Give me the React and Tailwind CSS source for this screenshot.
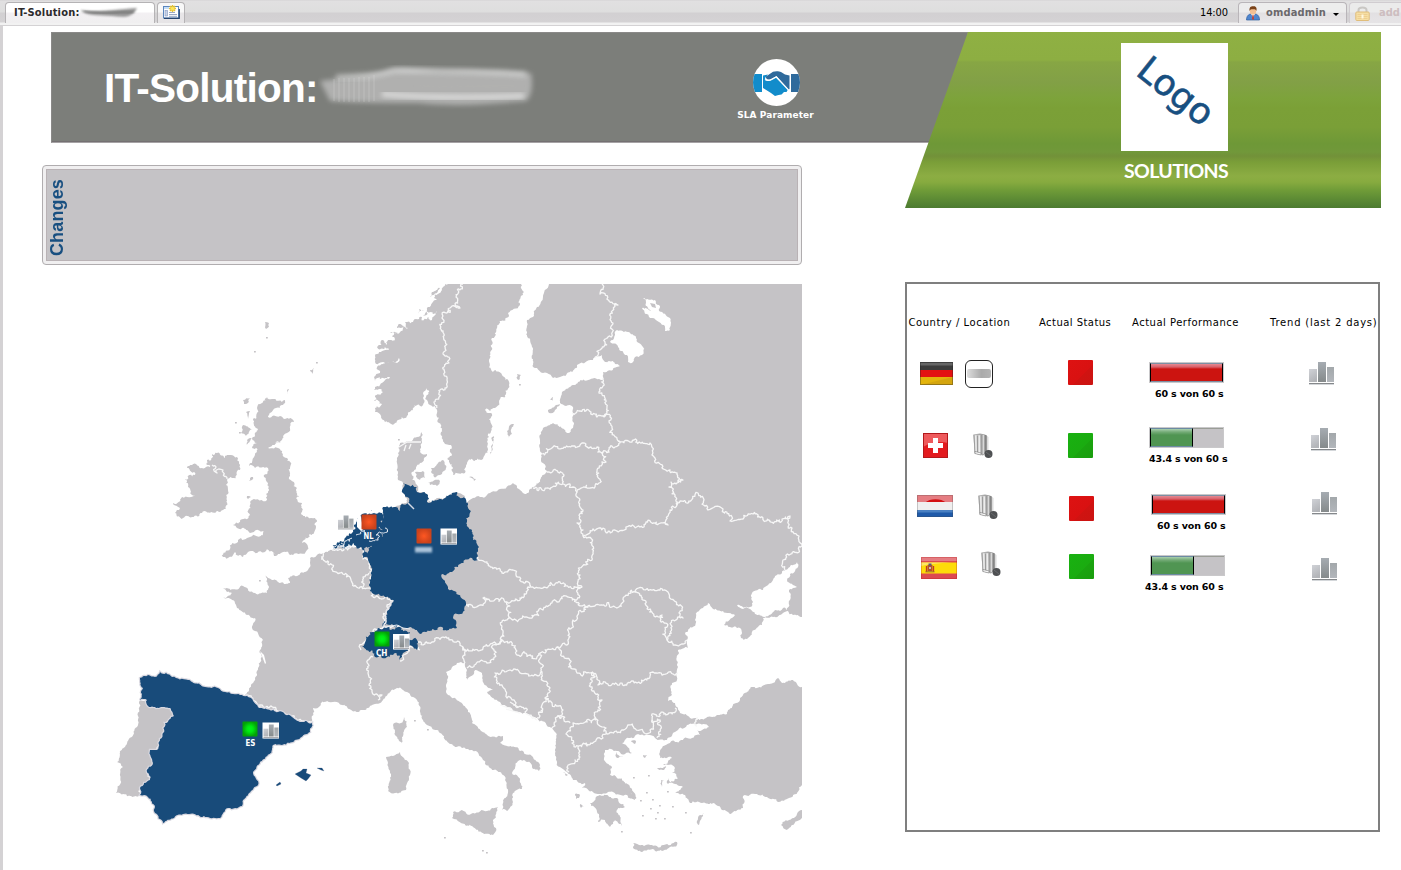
import React from "react";

/* ---------- map geometry ---------- */

const parse = (s) => s.trim().split(/\s+/).map((p) => p.split(",").map(Number));

const noise = (x, y) => {
  const v = Math.sin(x * 12.9898 + y * 78.233) * 43758.5453;
  return (v - Math.floor(v)) * 2 - 1;
};

function split(a, b, amp, out) {
  const dx = b[0] - a[0];
  const dy = b[1] - a[1];
  const len = Math.hypot(dx, dy);
  if (len < 2.2) {
    out.push(b);
    return;
  }
  const reach = len < 8 ? len * 1.7 : Math.min(len, 12);
  const k = (noise(a[0] + b[0], a[1] + b[1]) * amp * reach) / len;
  const m = [(a[0] + b[0]) / 2 - dy * k * 0.5, (a[1] + b[1]) / 2 + dx * k * 0.5];
  split(a, m, amp, out);
  split(m, b, amp, out);
}

function rough(s, amp = 0.3, closed = true) {
  const pts = parse(s);
  const onEdge = (p) => p[1] === 284 || p[0] === 802;
  const out = [pts[0]];
  const n = closed ? pts.length : pts.length - 1;
  for (let i = 0; i < n; i++) {
    const a = pts[i];
    const b = pts[(i + 1) % pts.length];
    if (onEdge(a) && onEdge(b)) out.push(b);
    else split(a, b, amp, out);
  }
  return "M" + out.map((p) => p[0].toFixed(1) + " " + p[1].toFixed(1)).join("L") + (closed ? "Z" : "");
}

const CONTINENT = `549,284 802,284 802,617 793,615 788,611 783,613 773,617 763,618 762,625 752,632 747,639 741,638 740,628 730,627 724,625 735,615 729,613 723,611 713,609 708,603 703,608 697,612 695,620 693,627 685,633 687,640 688,648 678,650 678,667 677,680 672,683 672,695 668,701 675,703 680,713 690,718 697,719 707,717 727,714 740,698 753,687 773,683 778,678 782,683 793,680 802,687 802,785 793,795 778,802 767,797 757,794 743,796 743,808 732,813 722,810 718,806 702,803 690,803 685,795 675,793 683,787 670,783 678,778 672,773 675,768 663,765 672,758 660,758 662,748 675,742 687,738 700,735 697,730 709,727 697,724 687,725 675,732 667,740 655,738 640,735 630,738 622,743 632,753 625,754 617,751 605,750 604,758 612,767 610,775 617,778 630,787 635,800 627,795 613,792 593,792 582,788 585,783 573,780 567,772 557,763 555,753 556,733 550,727 537,718 525,713 507,707 500,702 487,692 493,690 483,682 482,673 475,670 473,675 468,680 467,670 465,663 457,663 446,672 448,678 446,685 448,695 460,702 468,712 472,723 487,735 503,736 500,743 520,751 533,757 540,765 539,771 532,767 527,762 518,761 512,773 520,780 522,789 513,793 513,802 507,811 502,810 503,800 508,793 505,780 500,772 490,768 483,760 472,750 455,747 440,733 423,720 420,712 417,700 407,692 397,688 390,692 383,700 372,705 357,712 342,705 327,701 313,708 312,722 300,722 245,697 255,678 258,668 260,650 263,640 252,628 255,618 247,615 237,608 232,600 223,598 232,593 223,589 243,586 255,593 267,593 265,575 272,580 290,583 288,578 308,570 310,558 323,553 332,550 342,547 365,546 383,515 395,507 402,503 407,502 403,483 398,480 398,453 400,443 408,441 417,437 422,432 422,443 420,452 427,454 420,463 412,472 412,480 417,485 417,492 428,495 427,502 445,498 457,492 463,495 467,503 473,498 487,495 513,483 520,490 527,493 533,487 540,480 547,472 542,453 540,440 543,428 553,423 567,433 573,428 573,407 566,406 560,403 562,392 578,382 602,380 603,372 620,366 613,361 605,362 602,355 593,360 577,365 560,377 553,378 547,373 533,367 532,347 527,332 527,320 533,317 537,307 543,297`;

const SCANDINAVIA = `448,284 521,284 523,295 520,305 508,313 497,328 492,338 490,358 493,372 502,375 509,385 503,397 495,408 485,410 490,413 489,437 488,450 483,459 468,461 465,473 453,475 449,462 451,453 443,440 439,423 437,413 433,407 428,402 427,388 423,393 423,405 417,405 405,418 395,423 385,422 375,412 375,408 382,404 374,401 375,397 383,392 374,390 375,387 380,385 390,377 381,379 375,381 374,377 380,373 377,367 383,364 397,363 399,358 396,362 375,362 375,356 379,352 392,350 377,347 383,340 386,345 388,340 393,343 392,336 398,333 390,332 401,331 408,328 405,322 413,322 422,317 418,322 432,320 437,311 430,312 423,316 428,307 437,300 434,298 442,290`;

const BRITAIN = `267,397 272,399 285,400 283,405 270,413 268,417 280,416 292,419 294,422 287,433 275,443 281,442 268,448 280,449 287,458 289,477 297,488 299,497 292,498 302,503 302,512 315,518 316,527 308,538 302,543 308,547 307,550 293,555 273,552 248,552 243,557 235,552 223,557 220,555 238,540 250,537 263,533 265,530 250,533 242,528 233,525 240,522 250,515 250,505 252,500 267,500 268,483 264,477 268,468 255,468 249,466 257,452 252,447 257,443 252,438 258,430 253,420 257,408 262,403`;

const IRELAND = `192,465 202,468 210,467 207,460 212,454 217,453 225,458 237,457 240,470 232,478 227,480 228,490 223,510 202,513 192,517 183,518 175,513 180,508 173,503 187,497 195,495 188,487 185,479 195,475 187,468`;

const PORTUGAL = `140,700 147,700 148,706 170,708 174,716 165,723 163,733 157,750 150,750 153,763 147,772 150,780 140,788 140,795 132,797 116,793 123,767 117,762 125,747 137,727 139,702`;

const SPAIN = `140,678 148,675 155,677 160,672 166,673 172,677 188,680 205,687 218,688 233,694 247,696 258,707 278,712 292,717 303,722 312,723 310,732 293,742 273,745 272,750 260,762 253,772 258,785 243,800 242,806 228,808 220,818 207,817 183,814 163,823 155,813 155,807 148,797 140,795 140,788 150,780 147,772 153,763 150,750 157,750 163,733 165,723 174,716 170,708 148,706 147,700 140,700 143,688`;

const GERMANY = `403,483 408,485 417,487 417,492 428,495 427,502 434,501 445,498 449,495 457,492 459,497 466,500 468,508 467,522 472,530 473,540 478,550 478,560 472,558 460,564 450,572 443,574 448,587 466,605 463,612 453,618 457,628 442,627 423,632 408,628 398,625 383,627 387,610 393,600 385,597 372,593 370,583 372,570 368,560 370,547 382,537 380,528 384,518 383,507 394,507 400,511 402,504 408,503 409,498 403,493`;

const NETHERLANDS = `371,513 382,513 384,520 381,530 382,537 370,547 368,558 363,558 363,550 356,546 350,545 342,548 333,549 340,541 346,537 353,530 357,518 362,514`;

const SWITZERLAND = `373,632 383,629 398,627 410,632 408,640 418,642 417,650 412,646 405,652 400,660 395,653 387,657 375,657 372,650 362,647 366,640`;

const ISLANDS = [
  "404,717 407,727 402,744 395,735 393,725 403,721",
  "400,752 409,763 406,790 395,793 388,791 390,773 386,757 393,756",
  "453,812 460,811 473,813 487,811 498,807 493,820 496,828 493,835 483,833 452,818",
  "590,803 600,795 617,798 625,807 617,810 622,826 615,820 610,827 605,820 598,822 597,812",
  "633,843 650,845 677,842 677,845 655,851 633,848",
  "781,825 802,810 802,818 787,830",
  "510,425 514,424 512,434 509,438 507,431",
  "548,410 556,405 560,404 555,410 549,413",
  "549,399 553,397 553,401",
  "492,437 494,436 490,455",
  "415,472 423,471 425,478 420,480 416,477",
  "431,468 438,463 443,460 446,468 442,474 434,477 431,472",
  "428,482 440,481 437,486 430,485",
  "469,477 476,479 474,481",
  "517,374 521,375 519,380",
  "243,400 250,398 248,403 244,404",
  "246,412 250,411 248,419",
  "243,425 252,429 246,436 241,433",
  "247,440 252,438 246,446",
  "250,478 253,477 249,481",
  "247,496 251,497 248,499",
  "287,390 289,389 288,394",
  "310,370 314,368 312,374",
  "273,553 278,554 274,556",
  "700,815 704,813 699,825 697,821",
  "657,768 666,766 664,770 658,769",
  "661,780 664,780 662,787",
  "668,778 673,783 668,784",
  "612,784 622,786 632,789 636,799 625,790",
  "631,741 636,741 635,744",
  "616,752 623,757 617,758",
  "643,755 647,755 645,758",
  "575,794 580,795 576,799",
  "580,804 584,806 581,808",
  "563,772 568,775 566,776",
  "265,322 269,323 266,329",
  "430,297 437,293 440,288 432,292",
  "418,314 424,311 419,309",
  "397,328 404,326 399,324",
];

const ISLETS = [
  [640, 800], [646, 792], [650, 808], [657, 812], [642, 815], [659, 805], [664, 818], [672, 806], [633, 777],
  [648, 775], [652, 799], [690, 832], [621, 831], [667, 791], [685, 812], [655, 818], [444, 837], [482, 850],
  [486, 852], [414, 720], [427, 729], [235, 422], [239, 432], [266, 337], [254, 351], [288, 420], [316, 362],
  [259, 580], [398, 439], [519, 384],
];

const LAKES = [
  "617,330 628,332 636,338 643,347 642,355 635,357 633,362 628,362 627,355 618,347 610,342",
  "643,298 655,300 659,305 659,311 670,318 670,330 665,331 664,325 650,318 642,308 651,311 646,303",
  "787,610 790,600 789,592 793,588 797,587 787,580 790,574 798,567 797,562 790,567 782,573 773,580 763,590 752,593 753,602 750,607 737,605 743,609 750,609 757,615 765,617 775,610 780,611 783,608",
];

const BORDERS = [
  "463,284 456,297 460,308 450,308 442,318 443,353 449,360 444,367 447,380 445,388 439,393 437,408",
  "602,284 600,294 618,305 613,323 605,342 595,358",
  "603,378 599,393 607,408 603,416",
  "572,413 580,411 597,417 603,416 610,417 612,428 618,441",
  "542,454 553,447 573,446 582,443 597,447 603,452 615,447 618,441",
  "603,452 606,462 597,470 599,483 590,488 577,492 573,487 563,484 564,475 547,472",
  "533,488 548,488 563,484",
  "618,441 632,442 650,443 655,458 670,470 683,480 669,487 677,505 670,510 668,525 640,527 593,529 583,536",
  "577,492 583,510 577,523 583,530 583,536 593,552 580,575 582,587 575,600",
  "677,505 698,493 708,510 723,509 730,521 743,519 753,514 763,518 790,516 792,528 799,550 783,560 785,570",
  "472,558 487,562 502,573 513,570 530,585 543,588 560,582 582,587",
  "530,585 520,598 507,602 483,598 480,605 466,605",
  "507,602 509,617 532,618 543,610 560,600 575,600 588,607 615,607 635,592",
  "509,617 502,622 503,633 500,642 483,648 463,647 443,637 432,642 418,642",
  "463,647 465,655 465,663",
  "467,668 487,663 502,640 517,655 537,657 540,653 557,647 567,645 573,620 588,607",
  "557,647 570,663 577,673 590,673 593,672",
  "593,672 598,685 637,683 653,672 678,673",
  "593,672 592,687 602,700 595,717 573,723 570,728 572,743 578,748 603,738 606,728 595,717",
  "606,733 627,727 650,730 652,720 675,708",
  "652,720 660,720 657,738",
  "578,748 575,760 569,772",
  "552,728 557,717 570,723",
  "537,718 545,698 563,710 557,717",
  "537,720 507,698 495,673 513,670 542,672 550,688 545,698",
  "540,653 540,663 542,672",
  "635,592 662,615 667,640 675,645 687,640",
  "635,592 660,590 668,592 683,618 673,620 667,640",
  "323,553 340,573 350,577 360,587 371,589",
  "332,550 350,548 363,552 363,559 368,560 372,570 370,583 372,593 385,597 393,600 387,610 383,627 373,632 366,640 361,650",
  "363,587 363,577 369,573",
  "383,627 398,625 408,628",
  "373,657 368,673 372,690 382,695 378,700",
  "245,696 258,706 278,711 292,716 303,721 312,722",
  "400,661 412,647 420,650",
  "212,465 217,473 223,470 227,479",
  "697,717 697,726",
];

const NL_CHANNELS = [
  "333,547 345,541 352,538",
  "336,550 349,544",
  "356,535 365,531 362,526",
  "369,541 378,540 381,533 385,528",
  "341,543 343,548",
];

const TrendBars = ({ x = 0, y = 0, w = 25 }) => (
  <g transform={`translate(${x} ${y}) scale(${w / 25})`}>
    <rect x="0" y="7" width="8" height="13" fill="url(#tb1)" />
    <rect x="9" y="0" width="8" height="20" fill="url(#tb2)" />
    <rect x="18" y="5" width="7" height="15" fill="url(#tb3)" />
    <rect x="0" y="21" width="25" height="1.3" fill="#85888b" />
    <rect x="0" y="22.2" width="25" height="0.8" fill="#d3d6da" />
  </g>
);

const Marker = ({ x, y, kind }) => (
  <rect x={x} y={y} width="15" height="15" rx="1" fill={kind === "bad" ? "url(#mBad)" : "url(#mOk)"} />
);

function MapLabel({ x, y, w, children }) {
  return (
    <text x={x} y={y} textLength={w} lengthAdjust="spacingAndGlyphs" fill="#fff" fontSize="8" fontWeight="700" fontFamily="DejaVu Sans, sans-serif">
      {children}
    </text>
  );
}

function EuropeMap() {
  return (
    <svg className="block h-[586px] w-[751px]" viewBox="51 284 751 586">
      <defs>
        <radialGradient id="mBad">
          <stop offset="0" stopColor="#ff5722" />
          <stop offset="1" stopColor="#c9421b" />
        </radialGradient>
        <radialGradient id="mOk">
          <stop offset="0" stopColor="#00f51a" />
          <stop offset="0.4" stopColor="#00e810" />
          <stop offset="1" stopColor="#04a007" />
        </radialGradient>
        <filter id="mSoft" x="-20%" y="-50%" width="140%" height="200%">
          <feGaussianBlur stdDeviation="0.8" />
        </filter>
      </defs>
      <g fill="#c5c3c6">
        <path d={rough(CONTINENT)} />
        <path d={rough(SCANDINAVIA, 0.45)} />
        <path d={rough(BRITAIN, 0.4)} />
        <path d={rough(IRELAND, 0.45)} />
        <path d={rough(PORTUGAL, 0.3)} />
        {ISLANDS.map((s) => (
          <path key={s} d={rough(s, 0.3)} />
        ))}
        {ISLETS.map(([x, y]) => (
          <rect key={x + "-" + y} x={x} y={y} width="1.8" height="1.5" />
        ))}
      </g>
      <g fill="#fff">
        {LAKES.map((s) => (
          <path key={s} d={rough(s, 0.3)} />
        ))}
        <path d="M474 671l3 1 2 8 3 6-4-2-3-7z" opacity="0.8" />
        <path d="M260 651l4 4 2 8-1 1-3-8z" />
      </g>
      <path d="M650 303l5 1 1 4-4-1z" fill="#c5c3c6" />
      <g fill="none" stroke="#f7f7f7" strokeWidth="1.3" strokeLinejoin="round">
        {BORDERS.map((s) => (
          <path key={s} d={rough(s, 0.55, false)} />
        ))}
        <path d="M399 447l8-5 14 0M404 451l2-6M409 449l2-5" />
        <path d="M500 705l12 4M506 709l14 4M510 702l8 5" />
      </g>
      <path d={rough(SPAIN, 0.25)} fill="#184b7a" stroke="#d9d8e0" strokeWidth="2.4" paintOrder="stroke" />
      <g fill="#184b7a">
        <path d={rough(GERMANY, 0.4)} />
        <path d={rough(NETHERLANDS, 0.6)} />
        <path d={rough(SWITZERLAND, 0.5)} />
        <path d="M295 774l6-3 2-2 4 0-1 4 5 2-3 4-2 2-5-3zM317 768l5 0 2 3-3-1zM276 785l4-3 1 2-4 2z" stroke="#d9d8e0" strokeWidth="1" paintOrder="stroke" />
      </g>
      <path d={rough("383,627 387,610 393,600", 0.3, false)} fill="none" stroke="#e6e6ea" strokeWidth="1.6" />
      <path d="M408 503l6 6" stroke="#d5dbe6" strokeWidth="1.4" />
      <path d="M357 519l4-3 2 14-2 1-4-4z" fill="#fff" />
      <path d="M359 514l8-1 4 1 6-2 6 1-1-3-8 1-8 0z" fill="#fff" />
      <g fill="none" stroke="#e8edf4" strokeWidth="1">
        {NL_CHANNELS.map((s) => (
          <path key={s} d={rough(s, 0.6, false)} />
        ))}
        <path d="M385 627l12-2 6 3 7 1" />
      </g>

      <rect x="440.500" y="528.500" width="16.500" height="16" fill="#fff" />
      <rect x="262.500" y="722.500" width="16.500" height="16" fill="#fff" />
      <rect x="393" y="634" width="16.500" height="15.500" fill="#fff" />
      <TrendBars x={338} y={515.5} w={15.5} />
      <TrendBars x={441.5} y={530.5} w={15} />
      <TrendBars x={394} y={635.5} w={15} />
      <TrendBars x={263.5} y={724.5} w={15} />
      <Marker x={361.5} y={514.5} kind="bad" />
      <Marker x={416.5} y={528.5} kind="bad" />
      <Marker x={374.5} y={631.5} kind="ok" />
      <Marker x={242.5} y={721.5} kind="ok" />
      <MapLabel x={363.5} y={539} w={10}>NL</MapLabel>
      <MapLabel x={376} y={656} w={11.5}>CH</MapLabel>
      <MapLabel x={245.5} y={746} w={10}>ES</MapLabel>
      <rect x="415" y="547" width="17" height="5.500" fill="#aac3da" filter="url(#mSoft)" />
    </svg>
  );
}

/* ---------- shared gradients ---------- */

function SharedDefs() {
  return (
    <svg className="absolute h-0 w-0">
      <defs>
        <linearGradient id="tb1" x1="0" y1="0" x2="0.4" y2="1">
          <stop offset="0" stopColor="#d0d2d7" />
          <stop offset="1" stopColor="#b3b5b9" />
        </linearGradient>
        <linearGradient id="tb2" x1="0" y1="0" x2="0" y2="1">
          <stop offset="0" stopColor="#a6acb2" />
          <stop offset="1" stopColor="#858a8b" />
        </linearGradient>
        <linearGradient id="tb3" x1="0" y1="0" x2="0" y2="1">
          <stop offset="0" stopColor="#a3a8ab" />
          <stop offset="1" stopColor="#b2b6bb" />
        </linearGradient>
        <filter id="smudge" x="-20%" y="-60%" width="140%" height="220%">
          <feGaussianBlur stdDeviation="2.500" />
        </filter>
        <filter id="smudgeSm" x="-20%" y="-60%" width="140%" height="220%">
          <feGaussianBlur stdDeviation="1" />
        </filter>
      </defs>
    </svg>
  );
}

/* ---------- top bar ---------- */

function TopBar() {
  return (
    <div className="flex h-[26px] border-b border-[#d4d2d4] bg-[linear-gradient(#d3d1d3_0px,#e1e0e1_1px,#dedede_12px,#d2d0d2_13px,#d4d2d4_22px,#f2f2f2_23px,#f2f2f2_25px)] pl-[5px] pt-[2px] font-['DejaVu_Sans_Condensed','DejaVu_Sans',sans-serif]">
      <div className="flex h-[21px] w-[150px] items-center rounded-t-[4px] border border-b-0 border-[#b5b3b5] bg-[linear-gradient(#fff_45%,#f3f0f3_50%,#f0eff0)] pl-[8px]">
        <span className="whitespace-nowrap text-[11px] font-bold tracking-[0.2px] text-[#2c2a2c]">IT-Solution:</span>
        <svg className="ml-0 h-[14px] w-[60px]" viewBox="0 0 60 14">
          <path d="M1 4C16 7 40 3 57 2C52 13 42 11 32 10C18 9 8 10 1 5z" fill="#777" opacity="0.75" filter="url(#smudgeSm)" />
          <path d="M4 5c16 3 34 1 50 1" stroke="#555" strokeWidth="1.500" fill="none" opacity="0.6" filter="url(#smudgeSm)" />
        </svg>
      </div>
      <div className="ml-[2px] flex h-[21px] w-[28px] items-start justify-center rounded-t-[4px] border border-b-0 border-[#b5b3b5] bg-[linear-gradient(#f8f8f8_45%,#e8e6e8_50%,#e6e4e6)] pt-[2px]">
        <svg className="h-[14px] w-[17px]" viewBox="0 0 17 14">
          <rect x="0.500" y="1.500" width="15" height="11.500" fill="#fff" stroke="#5b86bd" />
          <path d="M1 13.300h15.300V4" stroke="#27456f" strokeWidth="1.200" fill="none" />
          <rect x="1" y="2" width="5" height="2" fill="#c5ddf5" />
          <rect x="2" y="5.500" width="2.500" height="5.500" fill="#c8d3e8" stroke="#8296bf" strokeWidth="0.600" />
          <path d="M6 7.500h6M6 9.500h8M6 11.300h8" stroke="#8e9fbd" strokeWidth="0.900" />
          <path d="M9.500 0v7M6 3.500h7M7 1l5 5M12 1L7 6" stroke="#e8c22c" strokeWidth="1.500" />
          <circle cx="9.500" cy="3.500" r="1.800" fill="#fbe55a" />
        </svg>
      </div>
      <div className="ml-auto flex">
        <span className="mr-[10px] pt-[3px] text-[11px] tracking-[-0.1px] text-black">14:00</span>
        <div className="flex h-[21px] w-[109px] items-center rounded-t-[4px] border border-b-0 border-[#b9b5b9] bg-[linear-gradient(#ededed_45%,#e2e0e2_50%,#e9e7e9)] pl-[7px]">
          <svg className="h-[15px] w-[14px]" viewBox="0 0 14 15">
            <path d="M0.500 14c0-4 2-5.500 4-6h5c2 0.500 4 2 4 6z" fill="#4f86cf" stroke="#2e5f9f" strokeWidth="0.700" />
            <path d="M5 8l2 3 2-3z" fill="#fff" />
            <path d="M6.500 9h1l0.500 4-1 1-1-1z" fill="#c8402f" />
            <ellipse cx="7" cy="5" rx="3.200" ry="3.700" fill="#f2bf93" />
            <path d="M3.500 5C3 0 6 0 7.500 0.200C10.500 0 11 2.500 10.400 5C10 3.500 9 3 7 3.200C5 3.200 4 3.500 3.500 5z" fill="#7a4218" />
          </svg>
          <span className="ml-[6px] text-[11px] font-bold tracking-[0.150px] text-[#6b686b]">omdadmin</span>
          <svg className="ml-[7px] mt-[3px] h-[3px] w-[6px]" viewBox="0 0 6 3">
            <path d="M0 0h6L3 3z" fill="#000" />
          </svg>
        </div>
        <div className="ml-[2px] flex h-[21px] w-[52px] items-center overflow-hidden rounded-tl-[4px] border border-b-0 border-r-0 border-[#d0ccd0] bg-[linear-gradient(#ebebeb_45%,#e2e0e2_50%,#e6e4e6)] pl-[5px]">
          <svg className="h-[15px] w-[15px] shrink-0" viewBox="0 0 15 15">
            <path d="M3.500 7V4C3.500 0.500 11.500 0.500 11.500 4V7" fill="none" stroke="#c9c7c4" strokeWidth="2" />
            <rect x="0.800" y="6" width="13.400" height="8.500" rx="1" fill="#f6dfa5" stroke="#e0bd7b" />
            <path d="M2.500 8.500h10M2.500 10.500h10M2.500 12.500h10" stroke="#ecc98a" strokeWidth="0.800" />
            <rect x="6.500" y="8.500" width="2" height="4" fill="#fff8e0" />
          </svg>
          <span className="ml-[9px] text-[11px] font-bold text-[#cdbdbf]">add</span>
        </div>
      </div>
    </div>
  );
}

/* ---------- header ---------- */

function HandshakeIcon() {
  return (
    <svg className="h-[47px] w-[47px]" viewBox="0 0 47 47">
      <clipPath id="hsClip">
        <circle cx="23.500" cy="23.500" r="23.500" />
      </clipPath>
      <g clipPath="url(#hsClip)">
        <rect width="47" height="47" fill="#fff" />
        <rect x="0" y="15" width="9" height="18" fill="#128ccb" />
        <rect x="38" y="15" width="9" height="18" fill="#2f6a9c" />
        <path d="M10 16.500L15 15.500L12 19C12 22 16 22.500 19 20.500L23 18.500L35 30.500L33.500 33L31 33L28.500 35.500L25.500 36L22 37L18 34L10 29z" fill="#128ccb" />
        <path d="M13 17.500L20 12.800C22 12 26 12 28 13L32 15.500L36.500 16.500V30L35.500 30.500L23.500 17L18 20C15 21.500 12 19.500 13 17.500z" fill="#2f6a9c" />
        <path d="M12 20.500C15 23 18 21 20.500 19.500L23.300 18L35.500 31" fill="none" stroke="#fff" strokeWidth="1.100" />
      </g>
    </svg>
  );
}

function HeaderBar() {
  return (
    <div className="flex h-[111px] w-[917px] border border-[#8a8988] border-b-[#a6a3a5] bg-[#7c7e7a] shadow-[inset_0_-1px_0_#747072]">
      <div className="flex pl-[52px] pt-[31px]">
        <h1 className="h-[48px] whitespace-nowrap font-['Liberation_Sans',sans-serif] text-[40.500px] font-bold leading-[48px] tracking-[-0.75px] text-white">
          IT-Solution:
        </h1>
        <svg className="-mt-px ml-0 h-[48px] w-[230px]" viewBox="0 0 230 48">
          <path d="M2 18C30 14 50 14 72 7C90 2 110 9 135 8C160 7 190 9 213 10C215 20 214 34 208 38C170 41 140 44 100 40C70 40 42 40 12 38z" fill="#c6c6c6" opacity="0.7" filter="url(#smudge)" />
          <path d="M18 14C40 13 60 13 76 7C100 8 150 7 208 11" stroke="#f4f4f4" strokeWidth="5" fill="none" opacity="0.5" filter="url(#smudge)" />
          <path d="M64 31C110 35 160 35 206 33" stroke="#fff" strokeWidth="6" fill="none" opacity="0.5" filter="url(#smudge)" />
          <path d="M100 23C130 25 170 22 202 23" stroke="#b2b2b0" strokeWidth="4" fill="none" opacity="0.4" filter="url(#smudge)" />
          <path d="M16 16v22M21 15v24M26 15v24M31 15v24M36 15v24M41 14v25M46 14v25M51 14v25M56 12v26" stroke="#e6e6e6" strokeWidth="1.500" opacity="0.180" />
        </svg>
      </div>
      <div className="ml-auto mr-[146px] flex w-[90px] flex-col items-center pt-[26px]">
        <HandshakeIcon />
        <span className="mt-[3px] whitespace-nowrap pr-px font-['DejaVu_Sans',sans-serif] text-[9px] font-bold leading-[13px] tracking-[0.080px] text-white">
          SLA Parameter
        </span>
      </div>
    </div>
  );
}

function BrandPanel() {
  return (
    <div className="flex h-[176px] w-[476px] flex-col items-center bg-[linear-gradient(#8fb043_0px,#8dae42_28px,#87a644_30px,#82a046_50px,#7da33b_66px,#7ba037_76px,#7a9f37_95px,#6e9837_112px,#71983a_120px,#729139_124px,#7a9e38_130px,#8cad43_144px,#87ab3f_150px,#709c38_158px,#5f8d35_166px,#4d7b31_176px)] pl-[62px] pt-[11px] [clip-path:polygon(63px_0,100%_0,100%_100%,0_100%)]">
      <div className="h-[108px] w-[107px] bg-white">
        <svg className="h-[108px] w-[107px]" viewBox="0 0 107 108">
          <text transform="translate(13.500 31) rotate(38.500)" fontFamily="DejaVu Sans, sans-serif" fontSize="36" textLength="86" lengthAdjust="spacingAndGlyphs" fill="#184f80" stroke="#184f80" strokeWidth="0.600">
            Logo
          </text>
        </svg>
      </div>
      <span className="mt-[7px] whitespace-nowrap pl-[4px] font-['Lato',sans-serif] text-[19.500px] font-bold leading-[26px] tracking-[-0.6px] text-white">SOLUTIONS</span>
    </div>
  );
}

/* ---------- status table ---------- */

function ServerIcon() {
  return (
    <svg className="h-[26px] w-[21px]" viewBox="0 0 21 26">
      <path d="M13 2l2.500 2v14l-2.500 2z" fill="#dcdcdc" />
      <path d="M0.500 1.500L7 0.500L12 1.500L14 3V19L10 22.500L1.500 20.500z" fill="#a4a4a4" />
      <path d="M0.500 1.500L8 2L8.500 22L1.500 20.500z" fill="#cfcfcf" />
      <path d="M1 2l1 17M4.500 2.500v17M8 2l0.300 19" stroke="#8f8f8f" strokeWidth="0.800" />
      <path d="M6.300 2.500v17M2.700 2.500l0.400 16" stroke="#f4f4f4" strokeWidth="1" />
      <path d="M10.300 2v19" stroke="#dedede" strokeWidth="1.200" />
      <path d="M12.700 2v17" stroke="#858585" strokeWidth="1.400" />
      <path d="M2 18.500l6 1.500v2L2 20.500z" fill="#fff" stroke="#777" strokeWidth="0.600" />
      <circle cx="15.500" cy="21" r="4" fill="#4e5052" />
      <path d="M13 19l5 4" stroke="#6a6c6e" strokeWidth="0.900" />
    </svg>
  );
}

function SiteIcon() {
  return (
    <div className="flex h-[28px] w-[28px] items-center justify-center rounded-[6px] border border-[#222] bg-white">
      <div className="-mt-[2px] h-[9px] w-[24px] shrink-0 rounded-[2px] bg-[linear-gradient(90deg,#ddd,#aaa_60%,#b4b4b4)] blur-[0.700px]" />
    </div>
  );
}

function Flag({ code }) {
  if (code === "de")
    return (
      <svg className="h-[23px] w-[33px]" viewBox="0 0 33 23">
        <rect width="33" height="8" fill="#3c3c3c" />
        <rect y="0.500" width="33" height="3" fill="#666" />
        <rect y="8" width="33" height="7" fill="#e31212" />
        <rect y="15" width="33" height="8" fill="#e3b40c" />
        <path d="M0 23h33v-8z" fill="#c99b12" opacity="0.600" />
        <rect x="0.500" y="0.500" width="32" height="22" fill="none" stroke="#222" strokeOpacity="0.350" />
      </svg>
    );
  if (code === "ch")
    return (
      <svg className="h-[25px] w-[25px]" viewBox="0 0 25 25">
        <rect width="25" height="25" fill="#e31b1f" />
        <path d="M0 0h25v10C17 8 8 9 0 14z" fill="#ee5a5c" />
        <path d="M10 5h5v5h5v5h-5v5h-5v-5H5v-5h5z" fill="#fff" />
        <rect x="0.500" y="0.500" width="24" height="24" fill="none" stroke="#b3191c" />
      </svg>
    );
  if (code === "nl")
    return (
      <svg className="h-[22px] w-[36px]" viewBox="0 0 36 22">
        <rect width="36" height="7.500" fill="#e57d82" />
        <path d="M8 7.500C13 3 24 3 29 7.500z" fill="#d30f12" />
        <rect y="7" width="36" height="8" fill="#f0efef" />
        <rect y="15" width="36" height="7" fill="#1f5aa9" />
        <rect y="15" width="36" height="2.500" fill="#4a80c2" />
        <rect x="0.500" y="0.500" width="35" height="21" fill="none" stroke="#444" strokeOpacity="0.250" />
      </svg>
    );
  return (
    <svg className="h-[22px] w-[36px]" viewBox="0 0 36 22">
      <rect width="36" height="22" fill="#dc4a50" />
      <rect width="36" height="4" fill="#e57d82" />
      <rect y="5.500" width="36" height="11" fill="#fddc0a" />
      <path d="M0 5.500h36C24 5.500 8 7 0 9z" fill="#fde768" />
      <rect x="6.500" y="8" width="5" height="6" fill="#b5502f" />
      <path d="M5.500 9v5.500M12.500 9v5.500" stroke="#c23b22" strokeWidth="1.300" />
      <rect x="7.500" y="6.500" width="3" height="2" fill="#5b5a78" />
      <rect x="8" y="10" width="2" height="2" fill="#cbb" />
      <path d="M4.500 14.800h9" stroke="#7c4a3c" strokeWidth="0.800" />
      <rect x="0.500" y="0.500" width="35" height="21" fill="none" stroke="#a11" strokeOpacity="0.250" />
    </svg>
  );
}

const StatusSquare = ({ ok }) => (
  <div
    className={
      ok
        ? "h-[25px] w-[25px] rounded-[1px] bg-[linear-gradient(135deg,#19b111_0%,#1aac10_58%,#1aa40f_60%,#1a9d0e)]"
        : "h-[25px] w-[25px] rounded-[1px] bg-[linear-gradient(135deg,#de1212_0%,#d91111_58%,#d01311_60%,#cb1412)]"
    }
  />
);

const Meter = ({ full }) => (
  <div className="flex h-[21px] w-[75px] border border-[#c9c8ca] bg-[#c5c3c6] shadow-[inset_0_1px_0_#9a9d96]">
    {full ? (
      <div className="h-[19px] w-[73px] border-x border-y border-x-black border-y-[#7d8fa3] bg-[linear-gradient(#e58a92_0px,#d9606a_3px,#cc1410_5px,#cc1410)]" />
    ) : (
      <div className="h-[19px] w-[43px] border-x border-y border-x-black border-y-[#6c8ba3] bg-[linear-gradient(#a9cfae_0px,#74ab77_3px,#509552_6px,#509552)]" />
    )}
  </div>
);

const ROWS = [
  { code: "de", ok: false, value: "60 s von 60 s", row: "h-[71px]", flag: "pl-[13px] pt-[6px]", loc: "pl-[5px] pt-[4px]", status: "pl-[28px] pt-[4px]", perf: "pl-[19px] pt-[6px]", text: "ml-[6px]", trend: "pl-[39px] pt-[6px]" },
  { code: "ch", ok: true, value: "43.4 s von 60 s", row: "h-[66px]", flag: "pl-[16px] pt-[6px]", loc: "pl-[13px] pt-[6px]", status: "pl-[28px] pt-[6px]", perf: "pl-[19px] pt-0", text: "ml-0", trend: "pl-[41px] pt-[1px]" },
  { code: "nl", ok: false, value: "60 s von 60 s", row: "h-[58px]", flag: "pl-[10px] pt-[2px]", loc: "pl-[18px] pt-[1px]", status: "pl-[29px] pt-[3px]", perf: "pl-[21px] pt-[1px]", text: "ml-[6px]", trend: "-mt-px pl-[42px]" },
  { code: "es", ok: true, value: "43.4 s von 60 s", row: "h-[60px]", flag: "pl-[14px] pt-[6px]", loc: "pl-[21px] pt-0", status: "pl-[29px] pt-[3px]", perf: "pl-[20px] pt-[4px]", text: "-ml-[5px]", trend: "pl-[42px] pt-[7px]" },
];

function StatusPanel() {
  return (
    <section className="mt-[74px] h-[550px] w-[475px] border-2 border-[#7f7f7f] bg-white font-['DejaVu_Sans',sans-serif] text-black">
      <div className="flex h-[72px] pt-[32px] text-[10px] leading-[13px]">
        <span className="w-[132px] whitespace-nowrap pl-[1.500px] tracking-[0.560px]">Country / Location</span>
        <span className="w-[93px] whitespace-nowrap tracking-[0.450px]">Actual Status</span>
        <span className="w-[138px] whitespace-nowrap tracking-[0.500px]">Actual Performance</span>
        <span className="whitespace-nowrap tracking-[0.780px]">Trend (last 2 days)</span>
      </div>
      {ROWS.map((r) => (
        <div key={r.code} className={"grid grid-cols-[53px_80px_90px_140px_108px] items-start " + r.row}>
          <div className={r.flag}>
            <Flag code={r.code} />
          </div>
          <div className={r.loc}>{r.code === "de" ? <SiteIcon /> : <ServerIcon />}</div>
          <div className={r.status}>
            <StatusSquare ok={r.ok} />
          </div>
          <div className={r.perf}>
            <Meter full={!r.ok} />
            <div className={"mt-[4px] whitespace-nowrap text-[9.500px] font-bold leading-[13px] tracking-[-0.150px] " + r.text}>{r.value}</div>
          </div>
          <div className={r.trend}>
            <svg className="h-[23px] w-[25px]" viewBox="0 0 25 23">
              <TrendBars />
            </svg>
          </div>
        </div>
      ))}
    </section>
  );
}

function ChangesPanel() {
  return (
    <section className="-ml-[9px] mt-[22px] flex h-[100px] w-[760px] rounded-[4px] border border-[#b0adaf] bg-[#f0eff0] p-[3px]">
      <div className="flex flex-1 items-center border border-[#b9b2b5] bg-[#c5c3c6]">
        <h2 className="mt-[5px] rotate-180 font-['Liberation_Sans',sans-serif] text-[18px] font-bold leading-[20px] tracking-[0.150px] text-[#184f80] [writing-mode:vertical-rl]">
          Changes
        </h2>
      </div>
    </section>
  );
}

export default function App() {
  return (
    <div className="h-[870px] w-[1401px] overflow-hidden bg-white">
      <SharedDefs />
      <div className="flex h-full border-l-[3px] border-[#d4d2d4]">
        <div className="-ml-[3px] flex flex-1 flex-col">
          <TopBar />
          <main className="flex flex-1 pl-[51px] pt-[6px]">
            <div className="flex w-[854px] shrink-0 flex-col">
              <HeaderBar />
              <ChangesPanel />
              <div className="mt-[19px]">
                <EuropeMap />
              </div>
            </div>
            <div className="relative flex flex-col">
              <BrandPanel />
              <StatusPanel />
            </div>
          </main>
        </div>
      </div>
    </div>
  );
}
